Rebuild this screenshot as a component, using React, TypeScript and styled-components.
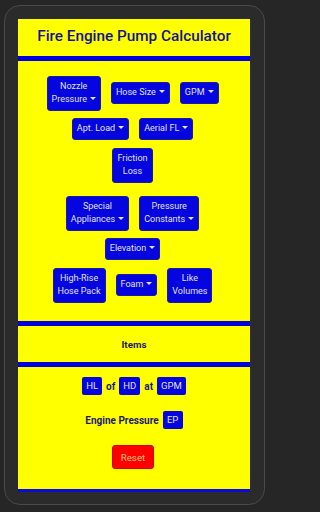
import React from 'react'
import styled, { createGlobalStyle } from 'styled-components'

const GlobalStyle = createGlobalStyle`
  html, body {
    margin: 0;
    padding: 0;
    background: #262626;
    font-family: Roboto, 'Liberation Sans', sans-serif;
  }
`

const Frame = styled.div`
  margin: 5px 0 0 4px;
  width: 261px;
  height: 500px;
  box-sizing: border-box;
  border: 1px solid #4a4a4a;
  border-radius: 16px;
  background: #2b2b2b;
  padding: 13px 14px 0 13px;
`

const Screen = styled.div`
  background: #ffff00;
  display: flex;
  flex-direction: column;
  border-bottom: 3px solid #0a0adc;
`

const Header = styled.div`
  height: 37px;
  display: flex;
  align-items: center;
  justify-content: center;
  padding-bottom: 3px;
  box-sizing: border-box;
`

const Title = styled.h1`
  margin: 0;
  font-size: 15.3px;
  font-weight: 500;
  color: #13138f;
`

const Bar = styled.div`
  height: 5px;
  background: #0000e0;
`

const ButtonSection = styled.div`
  height: 260px;
  box-sizing: border-box;
  padding-top: 14px;
  display: flex;
  flex-direction: column;
`

const Row = styled.div<{ $extra?: number }>`
  height: 36px;
  margin-top: ${p => p.$extra ?? 0}px;
  display: flex;
  align-items: center;
  justify-content: center;
  padding-right: 3px;
`

const BlueButton = styled.button<{ $caret?: boolean }>`
  margin: 0 5px;
  padding: 3px 4px;
  font-family: Roboto, 'Liberation Sans', sans-serif;
  font-size: 9px;
  line-height: 13.5px;
  color: #e2e2ee;
  background: #0505e0;
  border: 1px solid #1a1aa0;
  border-radius: 3px;
  text-align: center;

  ${p => p.$caret && `
    &::after {
      content: '';
      display: inline-block;
      margin-left: 3px;
      vertical-align: 2px;
      border-top: 3.5px solid #e2e2ee;
      border-left: 3px solid transparent;
      border-right: 3px solid transparent;
    }
  `}
`

const ItemsBand = styled.div`
  height: 36px;
  display: flex;
  align-items: center;
  justify-content: center;
  font-size: 9.8px;
  font-weight: 700;
  color: #1b1b4d;
`

const Results = styled.div`
  height: 122px;
  box-sizing: border-box;
  padding-top: 10px;
  display: flex;
  flex-direction: column;
  align-items: center;
`

const Line = styled.div<{ $mt?: number }>`
  display: flex;
  align-items: center;
  gap: 4px;
  margin-top: ${p => p.$mt ?? 0}px;
  font-size: 10px;
  font-weight: 700;
  color: #1b1b6a;
`

const Chip = styled.span`
  display: inline-block;
  height: 18px;
  line-height: 18px;
  padding: 0 4px;
  box-sizing: border-box;
  min-width: 20px;
  text-align: center;
  background: #0505e0;
  color: #e2e2ee;
  border-radius: 2px;
  font-size: 9.5px;
  font-weight: 400;
`

const ResetButton = styled.button`
  margin-top: 16px;
  margin-right: 2px;
  width: 42px;
  height: 24px;
  padding: 0;
  font-family: Roboto, 'Liberation Sans', sans-serif;
  font-size: 9.8px;
  color: #f6c27e;
  background: #ff0000;
  border: 1px solid #d40000;
  border-radius: 3px;
`

const App = () => {
  return (
    <>
      <GlobalStyle />
      <Frame>
        <Screen>
          <Header>
            <Title>Fire Engine Pump Calculator</Title>
          </Header>
          <Bar />
          <ButtonSection>
            <Row>
              <BlueButton $caret>Nozzle<br />Pressure</BlueButton>
              <BlueButton $caret>Hose Size</BlueButton>
              <BlueButton $caret>GPM</BlueButton>
            </Row>
            <Row>
              <BlueButton $caret>Apt. Load</BlueButton>
              <BlueButton $caret>Aerial FL</BlueButton>
            </Row>
            <Row>
              <BlueButton>Friction<br />Loss</BlueButton>
            </Row>
            <Row $extra={12}>
              <BlueButton $caret>Special<br />Appliances</BlueButton>
              <BlueButton $caret>Pressure<br />Constants</BlueButton>
            </Row>
            <Row>
              <BlueButton $caret>Elevation</BlueButton>
            </Row>
            <Row>
              <BlueButton>High-Rise<br />Hose Pack</BlueButton>
              <BlueButton $caret>Foam</BlueButton>
              <BlueButton>Like<br />Volumes</BlueButton>
            </Row>
          </ButtonSection>
          <Bar />
          <ItemsBand>Items</ItemsBand>
          <Bar />
          <Results>
            <Line>
              <Chip>HL</Chip>
              <span>of</span>
              <Chip>HD</Chip>
              <span>at</span>
              <Chip>GPM</Chip>
            </Line>
            <Line $mt={16}>
              <span>Engine Pressure</span>
              <Chip>EP</Chip>
            </Line>
            <ResetButton>Reset</ResetButton>
          </Results>
        </Screen>
      </Frame>
    </>
  )
}

export default App
